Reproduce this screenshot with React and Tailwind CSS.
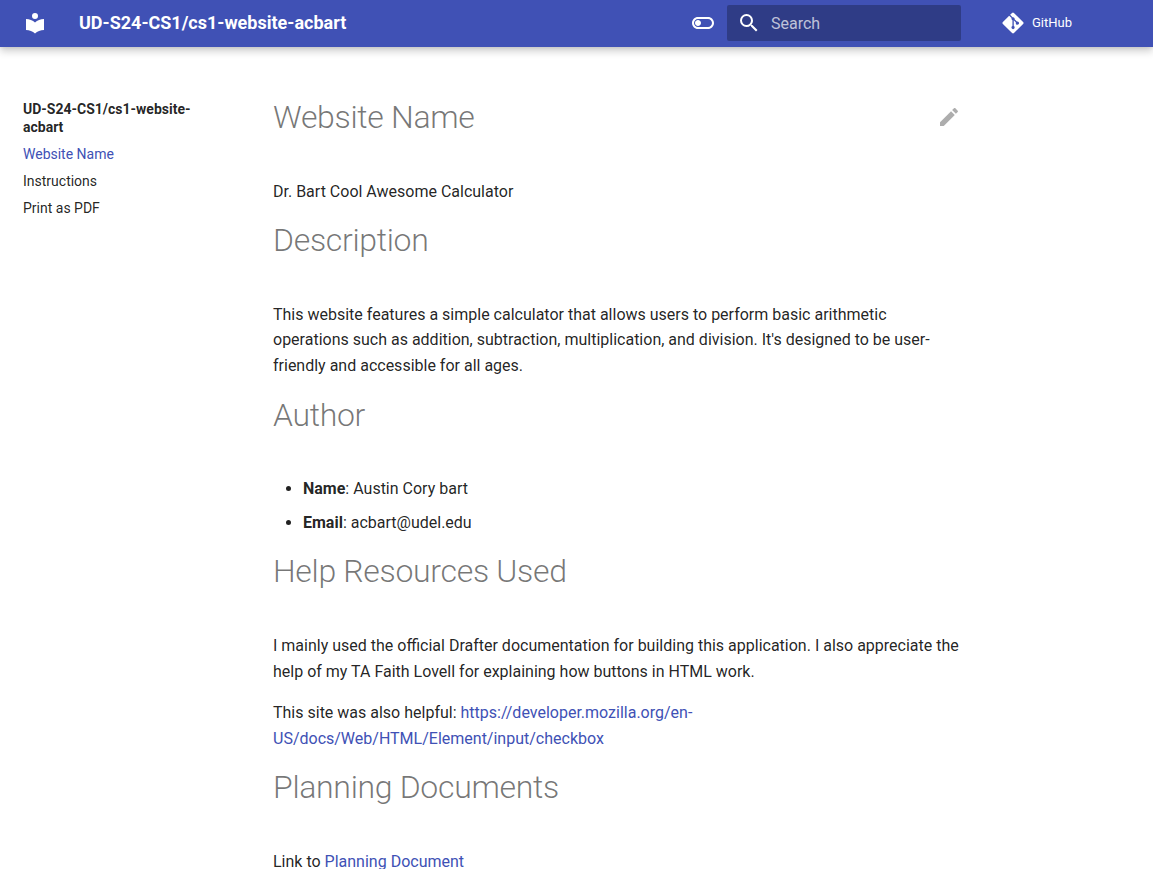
import React from "react";
import { FaGitAlt } from "react-icons/fa";

function Icon({ d, className = "" }) {
  return (
    <svg viewBox="0 0 24 24" className={"block size-6 shrink-0 fill-current " + className}>
      <path d={d} />
    </svg>
  );
}

const LIBRARY =
  "M12 8a3 3 0 0 0 3-3 3 3 0 0 0-3-3 3 3 0 0 0-3 3 3 3 0 0 0 3 3m0 3.54C9.64 9.35 6.5 8 3 8v11c3.5 0 6.64 1.35 9 3.54 2.36-2.19 5.5-3.54 9-3.54V8c-3.5 0-6.64 1.35-9 3.54Z";
const TOGGLE =
  "M17 6H7c-3.31 0-6 2.69-6 6s2.69 6 6 6h10c3.31 0 6-2.69 6-6s-2.69-6-6-6m0 10H7c-2.21 0-4-1.79-4-4s1.79-4 4-4h10c2.21 0 4 1.79 4 4s-1.79 4-4 4M7 9c-1.66 0-3 1.34-3 3s1.34 3 3 3 3-1.34 3-3-1.34-3-3-3Z";
const MAGNIFY =
  "M9.5 3A6.5 6.5 0 0 1 16 9.5c0 1.61-.59 3.09-1.56 4.23l.27.27h.79l5 5-1.5 1.5-5-5v-.79l-.27-.27A6.516 6.516 0 0 1 9.5 16 6.5 6.5 0 0 1 3 9.5 6.5 6.5 0 0 1 9.5 3m0 2C7 5 5 7 5 9.5S7 14 9.5 14 14 12 14 9.5 12 5 9.5 5Z";
const PENCIL =
  "M20.71 7.04c.39-.39.39-1.04 0-1.41l-2.34-2.34c-.37-.39-1.02-.39-1.41 0l-1.84 1.83 3.75 3.75M3 17.25V21h3.75L17.81 9.93l-3.75-3.75L3 17.25Z";

function Header() {
  return (
    <header className="relative z-10 flex h-[47px] items-center bg-[#4051b5] pl-[23px] pb-px text-white shadow-[0_0_4px_#0000001a,0_4px_8px_#00000033]">
      <Icon d={LIBRARY} />
      <div className="ml-8 w-[612px] pb-0.5 text-[18px] font-bold">UD-S24-CS1/cs1-website-acbart</div>
      <Icon d={TOGGLE} />
      <div className="ml-3 flex h-9 w-[234px] items-center rounded-[2px] bg-[#00000042] pl-2.5">
        <Icon d={MAGNIFY} />
        <span className="ml-[10px] pt-0.5 text-[16px] text-[#ffffffb3]">Search</span>
      </div>
      <a className="ml-[41px] flex items-center text-[13px]">
        <FaGitAlt className="h-6 w-[22px]" />
        <span className="ml-2">GitHub</span>
      </a>
    </header>
  );
}

function Sidebar() {
  return (
    <nav className="ml-[23px] mt-[53px] flex w-[190px] shrink-0 flex-col gap-[8.75px] text-[14px] leading-[1.3]">
      <div className="font-bold">
        UD-S24-CS1/cs1-website-
        <br />
        acbart
      </div>
      <a className="text-[#4051b5]">Website Name</a>
      <a>Instructions</a>
      <a>Print as PDF</a>
    </nav>
  );
}

function Heading({ children }) {
  return (
    <h1 className="mb-10 text-[32px] font-light leading-[1.3] tracking-[-0.01em] text-[#0000008a]">{children}</h1>
  );
}

function Link({ children }) {
  return <a className="text-[#4051b5]">{children}</a>;
}

export default function App() {
  return (
    <div className="h-[872px] overflow-hidden bg-white font-['Roboto',sans-serif] text-[#000000de] antialiased">
      <div className="h-[869px] overflow-hidden">
        <Header />
        <div className="flex">
          <Sidebar />
          <article className="ml-[60px] mt-[50px] w-[688px] text-[16px] leading-[1.6]">
            <div className="flex justify-between">
              <Heading>Website Name</Heading>
              <Icon d={PENCIL} className="mt-2 text-[#00000052]" />
            </div>
            <p className="mb-4">Dr. Bart Cool Awesome Calculator</p>
            <Heading>Description</Heading>
            <p className="mb-4">
              This website features a simple calculator that allows users to perform basic arithmetic
              <br />
              operations such as addition, subtraction, multiplication, and division. It's designed to be user-
              <br />
              friendly and accessible for all ages.
            </p>
            <Heading>Author</Heading>
            <ul className="mb-4 flex list-disc flex-col gap-2 pl-[30px]">
              <li>
                <strong className="font-bold">Name</strong>: Austin Cory bart
              </li>
              <li>
                <strong className="font-bold">Email</strong>: acbart@udel.edu
              </li>
            </ul>
            <Heading>Help Resources Used</Heading>
            <p className="mb-4">
              I mainly used the official Drafter documentation for building this application. I also appreciate the
              <br />
              help of my TA Faith Lovell for explaining how buttons in HTML work.
            </p>
            <p className="mb-4">
              This site was also helpful:{" "}
              <Link>
                https://developer.mozilla.org/en-
                <br />
                US/docs/Web/HTML/Element/input/checkbox
              </Link>
            </p>
            <Heading>Planning Documents</Heading>
            <p>
              Link to <Link>Planning Document</Link>
            </p>
          </article>
        </div>
      </div>
    </div>
  );
}
